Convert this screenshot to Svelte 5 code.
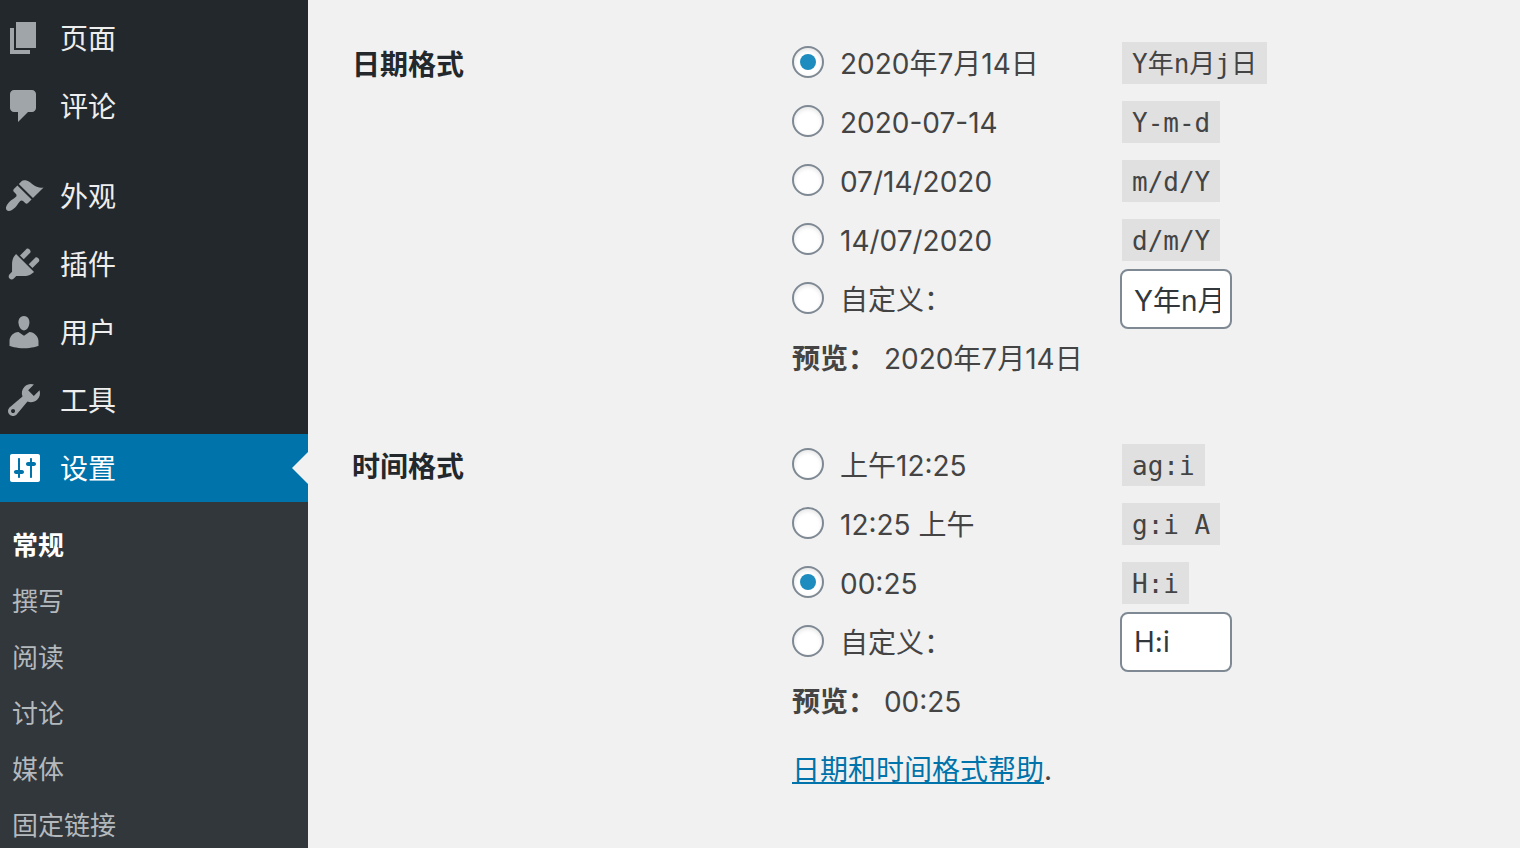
<script>
    const menu = [
        { name: "页面", icon: "M6 15V2h10v13H6zm-1 1h8v2H3V5h2v11z" },
        { name: "评论", icon: "M5 2h9c1.1 0 2 .9 2 2v7c0 1.1-.9 2-2 2h-2l-5 5v-5H5c-1.1 0-2-.9-2-2V4c0-1.1.9-2 2-2z" },
        { separator: true },
        { name: "外观", icon: "M14.48 11.06L7.41 3.99l1.5-1.5c.5-.56 2.3-.47 3.51.32 1.21.8 1.43 1.28 2.91 2.1 1.18.64 2.45 1.26 4.45.85zm-.71.71L6.7 4.7 4.93 6.47c-.39.39-.39 1.02 0 1.41l1.06 1.06c.39.39.39 1.03 0 1.42-.6.6-1.43 1.11-2.21 1.69-.35.26-.7.53-1.01.84C1.43 14.23.4 16.08 1.4 17.07c.99 1 2.84-.03 4.18-1.36.31-.31.58-.66.85-1.02.57-.78 1.08-1.61 1.69-2.21.39-.39 1.02-.39 1.41 0l1.06 1.06c.39.39 1.02.39 1.41 0z" },
        { name: "插件", icon: "M13.11 4.36L9.87 7.6 8 5.73l3.24-3.24c.35-.34 1.05-.2 1.56.32.52.51.66 1.21.31 1.55zm-8 1.77l.91-1.12 9.01 9.01-1.19.84c-.71.71-2.63 1.16-3.82 1.16H6.14L4.9 17.26c-.59.59-1.54.59-2.12 0-.59-.58-.59-1.53 0-2.12l1.24-1.24v-3.88c0-1.13.4-3.19 1.09-3.89zm7.26 3.97l3.24-3.24c.34-.35 1.04-.21 1.55.31.52.51.66 1.21.31 1.55l-3.24 3.25z" },
        { name: "用户", icon: "M10 9.25c-2.27 0-2.73-3.44-2.73-3.44C7 4.02 7.82 2 9.97 2c2.16 0 2.98 2.02 2.71 3.81 0 0-.41 3.44-2.68 3.44zm0 2.57L12.72 10c2.39 0 4.52 2.33 4.52 4.53v2.49s-3.65 1.13-7.24 1.13c-3.65 0-7.24-1.13-7.24-1.13v-2.49c0-2.25 1.94-4.48 4.47-4.48z" },
        { name: "工具", icon: "M16.68 9.77c-1.34 1.34-3.3 1.67-4.95.99l-5.41 6.52c-.99.99-2.59.99-3.58 0s-.99-2.59 0-3.57l6.52-5.42c-.68-1.65-.35-3.61.99-4.95 1.28-1.28 3.12-1.62 4.72-1.06l-2.89 2.89 2.82 2.82 2.86-2.87c.53 1.58.18 3.39-1.08 4.65zM3.81 16.21c.4.39 1.04.39 1.43 0 .4-.4.4-1.04 0-1.43-.39-.4-1.03-.4-1.43 0-.39.39-.39 1.03 0 1.43z" },
        { name: "设置", current: true, icon: "M18 16V4c0-.55-.45-1-1-1H4c-.55 0-1 .45-1 1v12c0 .55.45 1 1 1h13c.55 0 1-.45 1-1zM8 11h1c.55 0 1 .45 1 1s-.45 1-1 1H8v1.5c0 .28-.22.5-.5.5s-.5-.22-.5-.5V13H6c-.55 0-1-.45-1-1s.45-1 1-1h1V5.5c0-.28.22-.5.5-.5s.5.22.5.5V11zm5-2h-1c-.55 0-1-.45-1-1s.45-1 1-1h1V5.5c0-.28.22-.5.5-.5s.5.22.5.5V7h1c.55 0 1 .45 1 1s-.45 1-1 1h-1v5.5c0 .28-.22.5-.5.5s-.5-.22-.5-.5V9z" },
    ];

    const submenu = ["常规", "撰写", "阅读", "讨论", "媒体", "固定链接"];

    const dateFormats = [
        { format: "Y年n月j日", text: "2020年7月14日" },
        { format: "Y-m-d", text: "2020-07-14" },
        { format: "m/d/Y", text: "07/14/2020" },
        { format: "d/m/Y", text: "14/07/2020" },
    ];

    const timeFormats = [
        { format: "ag:i", text: "上午12:25" },
        { format: "g:i A", text: "12:25 上午" },
        { format: "H:i", text: "00:25" },
    ];

    let dateFormat = "Y年n月j日";
    let customDate = "Y年n月j日";
    let timeFormat = "H:i";
    let customTime = "H:i";

    // Text for the preview line, a custom format is shown as it was typed
    function preview(formats, selected, custom) {
        const match = formats.find((f) => f.format === selected);
        return match ? match.text : custom;
    }

    // Picking a preset also fills the custom field
    $: if (dateFormat !== "custom") customDate = dateFormat;
    $: if (timeFormat !== "custom") customTime = timeFormat;
</script>

<div class="admin">
    <nav class="sidebar">
        <ul class="menu">
            {#each menu as item}
                {#if item.separator}
                    <li class="separator"></li>
                {:else}
                    <li>
                        <a href="#menu" class="menu-item" class:current={item.current}>
                            <svg class="menu-icon" viewBox="0 0 20 20" aria-hidden="true"><path d={item.icon} /></svg>
                            <span class="menu-name">{item.name}</span>
                        </a>
                    </li>
                {/if}
            {/each}
        </ul>
        <ul class="submenu">
            {#each submenu as name, i}
                <li><a href="#submenu" class:current={i === 0}>{name}</a></li>
            {/each}
        </ul>
    </nav>

    <main class="content">
        <section class="setting">
            <h2 id="date-title">日期格式</h2>
            <div role="radiogroup" aria-labelledby="date-title">
                {#each dateFormats as f}
                    <div class="option">
                        <label>
                            <input type="radio" name="date_format" value={f.format} bind:group={dateFormat}>
                            <span>{f.text}</span>
                        </label>
                        <code>{f.format}</code>
                    </div>
                {/each}
                <div class="option">
                    <label>
                        <input type="radio" name="date_format" value="custom" bind:group={dateFormat}>
                        <span>自定义：</span>
                    </label>
                    <input type="text" class="custom" aria-label="自定义日期格式" bind:value={customDate} on:focus={() => (dateFormat = "custom")}>
                </div>
                <p class="preview"><strong>预览：</strong> <span>{preview(dateFormats, dateFormat, customDate)}</span></p>
            </div>
        </section>

        <section class="setting">
            <h2 id="time-title">时间格式</h2>
            <div role="radiogroup" aria-labelledby="time-title">
                {#each timeFormats as f}
                    <div class="option">
                        <label>
                            <input type="radio" name="time_format" value={f.format} bind:group={timeFormat}>
                            <span>{f.text}</span>
                        </label>
                        <code>{f.format}</code>
                    </div>
                {/each}
                <div class="option">
                    <label>
                        <input type="radio" name="time_format" value="custom" bind:group={timeFormat}>
                        <span>自定义：</span>
                    </label>
                    <input type="text" class="custom" aria-label="自定义时间格式" bind:value={customTime} on:focus={() => (timeFormat = "custom")}>
                </div>
                <p class="preview"><strong>预览：</strong> <span>{preview(timeFormats, timeFormat, customTime)}</span></p>
                <p class="help"><a href="#help">日期和时间格式帮助</a>.</p>
            </div>
        </section>
    </main>
</div>

<style>
    :global(body) {
        background: #f1f1f1;
    }

    .admin {
        display: flex;
        height: 100vh;
        overflow: hidden;
        font-family: Inter, "Noto Sans CJK SC", sans-serif;
        font-size: 28px;
        line-height: 42px;
        color: #444;
    }

    ul {
        list-style: none;
        margin: 0;
        padding: 0;
    }

    .sidebar {
        flex: 0 0 308px;
        background: #23282d;
    }

    .menu {
        padding-top: 4px;
    }

    .separator {
        height: 22px;
    }

    .menu-item {
        position: relative;
        display: flex;
        align-items: center;
        gap: 16px;
        height: 68px;
        padding-left: 4px;
        color: #eee;
        text-decoration: none;
    }

    .menu-icon {
        width: 40px;
        height: 40px;
        fill: #a0a5aa;
    }

    .menu-name {
        padding-top: 2px;
    }

    .menu-item.current {
        background: #0073aa;
        color: #fff;
    }

    .menu-item.current .menu-icon {
        fill: #fff;
    }

    /* arrow that points from the page to the open section */
    .menu-item.current::after {
        content: "";
        position: absolute;
        right: 0;
        top: 18px;
        border: 16px solid transparent;
        border-left: 0;
        border-right-color: #f1f1f1;
    }

    .submenu {
        padding: 16px 0;
        background: #32373c;
    }

    .submenu a {
        display: block;
        padding-left: 12px;
        font-size: 26px;
        line-height: 56px;
        color: #b4b9be;
        text-decoration: none;
    }

    .submenu a.current {
        color: #fff;
        font-weight: 600;
    }

    .content {
        flex: 1;
        min-width: 0;
        padding: 33px 44px;
    }

    .setting {
        display: grid;
        grid-template-columns: 440px 1fr;
        margin-bottom: 45px;
    }

    h2 {
        margin: 0;
        font-size: 28px;
        font-weight: 600;
        line-height: 64px;
        color: #23282d;
    }

    .option {
        display: flex;
        align-items: center;
        height: 59px;
    }

    label {
        display: flex;
        align-items: center;
        gap: 16px;
        width: 328px;
    }

    label span {
        padding-top: 2px;
    }

    input {
        box-sizing: border-box;
        margin: 0;
        border: 2px solid #7e8993;
        background: #fff;
    }

    input[type="radio"] {
        appearance: none;
        display: grid;
        place-items: center;
        width: 32px;
        height: 32px;
        margin-bottom: 2px;
        border-radius: 50%;
        box-shadow: inset 0 2px 4px rgba(0, 0, 0, 0.1);
    }

    input[type="radio"]:checked::before {
        content: "";
        width: 16px;
        height: 16px;
        border-radius: 50%;
        background: #1e8cbe;
    }

    code {
        margin: 0 2px;
        padding: 2px 10px 0;
        background: #e0e0e0;
        font-family: "DejaVu Sans Mono", "Noto Sans CJK SC", monospace;
        font-size: 26px;
        line-height: 40px;
    }

    .custom {
        width: 112px;
        height: 60px;
        padding: 0 10px 0 12px;
        border-radius: 8px;
        font-family: inherit;
        font-size: 28px;
        color: #32373c;
    }

    .preview {
        margin: 0;
        line-height: 62px;
    }

    .help {
        margin: 16px 0 0;
    }

    .help a {
        color: #0073aa;
    }
</style>
